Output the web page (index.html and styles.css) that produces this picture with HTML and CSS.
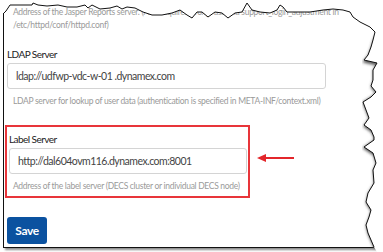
FILE: index.html
```html
<!DOCTYPE html>
<html lang="en">
<head>
  <meta charset="UTF-8" />
  <meta name="viewport" content="width=device-width, initial-scale=1.0" />
  <title>Server settings</title>
  <link rel="stylesheet" href="styles.css">
</head>
<body>
  <div class="page">
    <div class="sheet">
      <p class="hint top-hint">Address of the Jasper Reports server. (Also requires ProxyPass and support_login_adjustment in<br>/etc/httpd/conf/httpd.conf)</p>

      <div class="field">
        <label class="label">LDAP Server</label>
        <div class="input wide">ldap://udfwp-vdc-w-01 .dynamex.com</div>
        <p class="hint">LDAP server for lookup of user data (authentication is specified in META-INF/context.xml)</p>
      </div>

      <div class="field marked">
        <label class="label">Label Server</label>
        <div class="input narrow">http://dal604ovm116.dynamex.com:8001</div>
        <p class="hint">Address of the label server (DECS cluster or individual DECS node)</p>
      </div>

      <button class="save">Save</button>
    </div>

    <!-- torn paper edge over the top and right of the capture -->
    <svg class="tear" viewBox="0 0 383 252" width="383" height="252">
      <defs>
        <filter id="soft" x="-20%" y="-20%" width="140%" height="140%">
          <feGaussianBlur stdDeviation="1.6" />
        </filter>
      </defs>
      <path d="M376 34 L373 40 L371 47 L368 55 L364 60 L377 63 L373 70 L373 80 L371 86 L376 92 L371 97 L363 102 L366 110 L369 118 L364 125 L371 130 L374 137 L374 140 L364 147 L373 153 L376 163 L373 170 L374 183 L368 193 L366 202 L371 210 L369 217 L366 225 L368 233 L371 240 L374 247"
            fill="none" stroke="#555" stroke-width="4" transform="translate(2 1)" filter="url(#soft)" />
      <path d="M0 0 L0 13 L4 13 L6 11 L10 5 L20 5 L32 5 L33 3 L38 5 L47 6 L58 5 L67 7 L77 7 L85 5 L88 8 L92 5 L100 9 L110 8 L117 6 L122 9 L127 7 L135 8 L143 12 L152 15 L162 15 L172 13 L180 10 L187 15 L192 18 L197 12 L202 12 L208 17 L215 12 L222 13 L228 18 L235 13 L242 12 L247 3 L252 10 L260 12 L270 13 L277 10 L280 5 L283 7 L287 12 L297 12 L310 12 L323 10 L333 9 L343 10 L350 12 L353 17 L360 22 L370 27 L375 32 L373 40 L371 47 L368 55 L364 60 L377 63 L373 70 L373 80 L371 86 L376 92 L371 97 L363 102 L366 110 L369 118 L364 125 L371 130 L374 137 L374 140 L364 147 L373 153 L376 163 L373 170 L374 183 L368 193 L366 202 L371 210 L369 217 L366 225 L368 233 L371 240 L374 247 L377 252 L383 252 L383 0 Z"
            fill="#fff" />
      <path d="M4 13 L6 11 L10 5 L20 5 L32 5 L33 3 L38 5 L47 6 L58 5 L67 7 L77 7 L85 5 L88 8 L92 5 L100 9 L110 8 L117 6 L122 9 L127 7 L135 8 L143 12 L152 15 L162 15 L172 13 L180 10 L187 15 L192 18 L197 12 L202 12 L208 17 L215 12 L222 13 L228 18 L235 13 L242 12 L247 3 L252 10 L260 12 L270 13 L277 10 L280 5 L283 7 L287 12 L297 12 L310 12 L323 10 L333 9 L343 10 L350 12 L353 17 L360 22 L370 27 L375 32 L373 40 L371 47 L368 55 L364 60 L377 63 L373 70 L373 80 L371 86 L376 92 L371 97 L363 102 L366 110 L369 118 L364 125 L371 130 L374 137 L374 140 L364 147 L373 153 L376 163 L373 170 L374 183 L368 193 L366 202 L371 210 L369 217 L366 225 L368 233 L371 240 L374 247"
            fill="none" stroke="#111" stroke-width="1" stroke-linejoin="round" />
    </svg>

    <!-- annotation arrow -->
    <svg class="arrow" viewBox="0 0 40 12" width="40" height="12">
      <path d="M10 6 L38 6" stroke="#e3262b" stroke-width="2" />
      <path d="M1 6 L10 2 L10 10 Z" fill="#e3262b" />
    </svg>
  </div>
</body>
</html>
```

FILE: styles.css
```css
* {
  box-sizing: border-box;
}

body {
  margin: 0;
  background: #fff;
  font-family: 'Lato', 'Liberation Sans', sans-serif;
}

.page {
  position: relative;
  width: 383px;
  height: 252px;
  overflow: hidden;
}

.sheet {
  margin-left: 3px;
  height: 248px;
  padding: 6px 0 0 3px;
  border-left: 1px solid #111;
  border-bottom: 1px solid #111;
  box-shadow: 2px 2px 2px rgba(0, 0, 0, 0.45);
}

.hint {
  margin: 0;
  padding-left: 6px;
  font-size: 8.5px;
  line-height: 13px;
  color: #9a9a9a;
  letter-spacing: -0.3px;
  white-space: nowrap;
}

.top-hint {
  padding-left: 6px;
  margin-bottom: 15px;
}

.field {
  display: flex;
  flex-direction: column;
}

.label {
  font-size: 10px;
  line-height: 14px;
  color: #222;
  letter-spacing: -0.55px;
}

.input {
  height: 26px;
  margin: 2px 0 6px;
  padding-left: 8px;
  display: flex;
  align-items: center;
  border: 1px solid #d4d4d4;
  border-radius: 3px;
  font-size: 10.5px;
  color: #444;
  letter-spacing: -0.5px;
}

.input.wide {
  width: 319px;
}

.input.narrow {
  width: 238px;
}

.marked {
  width: 245px;
  margin: 17px 0 0 -2px;
  padding: 5px 3px 3px 2px;
  border: 2px solid #e8353a;
}

.marked .hint {
  padding-left: 4px;
}

.save {
  margin-top: 19px;
  width: 40px;
  height: 27px;
  border: none;
  border-radius: 3px;
  background: #0b52a0;
  color: #fff;
  font-family: 'Lato', 'Liberation Sans', sans-serif;
  font-weight: bold;
  font-size: 12px;
  letter-spacing: -0.4px;
  padding: 0;
}

.tear {
  position: absolute;
  left: 0;
  top: 0;
}

.arrow {
  position: absolute;
  left: 256px;
  top: 152px;
}
```
